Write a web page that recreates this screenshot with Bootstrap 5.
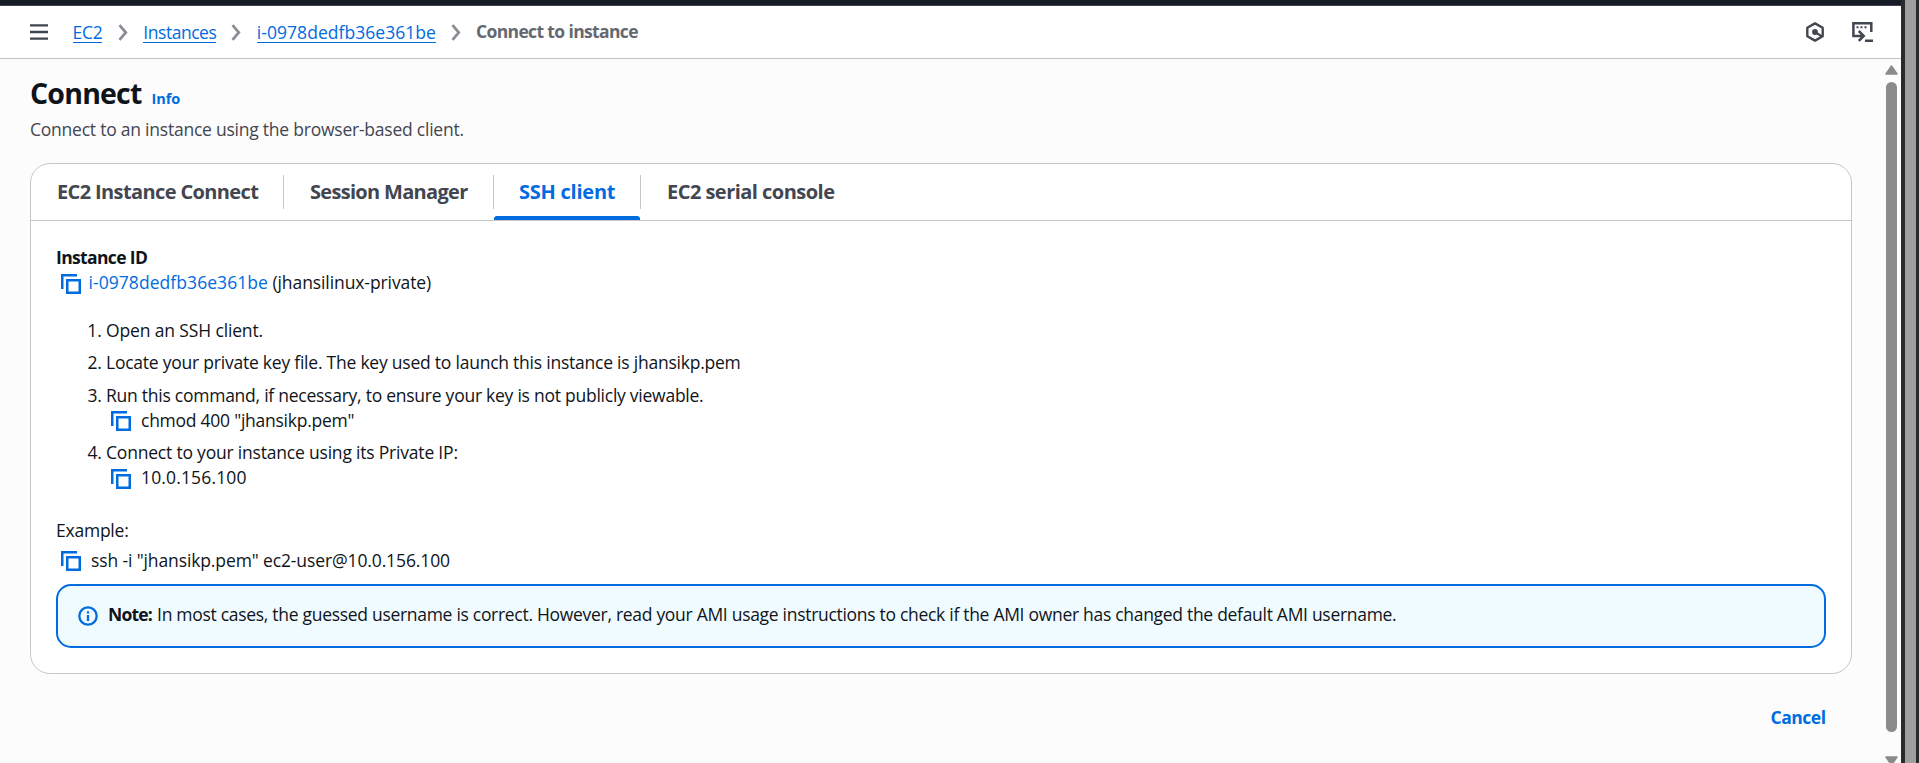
<!DOCTYPE html>
<html lang="en">
<head>
<meta charset="utf-8">
<meta name="viewport" content="width=device-width, initial-scale=1">
<title>Connect to instance | EC2</title>
<link href="https://cdn.jsdelivr.net/npm/bootstrap@5.3.0/dist/css/bootstrap.min.css" rel="stylesheet">
<style>
  :root { --link: #006ce0; --line: #c6c6cd; --ink: #0f141a; --muted: #424650; }
  body { font-family: "Open Sans", "Noto Sans", sans-serif; font-size: 17.5px; line-height: 25px; color: var(--ink); background: #fcfcfc; letter-spacing: -.23px; }
  a { color: var(--link); }
  svg { display: block; flex: none; }
  .page-main { min-width: 0; }
  .global-strip { height: 6px; background: #161d26; border-bottom: 1px solid #45404f; }
  .top-row { height: 53px; background: #fff; border-bottom: 1px solid #c2c2c6; padding: 0 28px 0 30px; }
  .crumbs { margin: 0 0 0 24.5px; }
  .crumbs a { text-decoration: none; display: block; height: 23px; border-bottom: 1.25px solid var(--link); line-height: 25px; margin-top: -1px; }
  .crumbs .current { color: #656871; font-weight: 700; letter-spacing: -.63px; margin-top: -1px; }
  .tools { gap: 27px; }
  .page-scroll { height: 704px; }
  .content-col { padding: 0 33px 0 30px; }
  .title-block { height: 104px; padding-top: 16px; }
  .title-block h1 { font-size: 28.5px; line-height: 37.5px; font-weight: 700; letter-spacing: -.8px; }
  .info-link { font-size: 14.5px; font-weight: 700; text-decoration: none; letter-spacing: -.05px; margin-left: 10px; }
  .subtitle { color: var(--muted); margin-top: 4.5px; letter-spacing: -.23px; }
  .panel { height: 511px; border: 1px solid var(--line); border-radius: 20px; }
  .panel-tabs { height: 57px; border-bottom: 1px solid var(--line); }
  .panel-tabs .nav-link { position: relative; padding: 15px 0 0 26px; font-size: 20px; font-weight: 700; color: var(--muted); border-radius: 0; height: 56px; }
  .panel-tabs .nav-link.active { color: var(--link); padding-left: 25px; }
  .panel-tabs .sep::after { content: ""; position: absolute; right: 0; top: 11px; width: 1px; height: 34px; background: var(--line); }
  .panel-tabs .active::before { content: ""; position: absolute; left: 0; right: 1px; bottom: 0; height: 4px; background: var(--link); border-radius: 3px 3px 0 0; }
  .t1 { width: 253px; letter-spacing: -.62px; } .t2 { width: 210px; letter-spacing: -.69px; }
  .t3 { width: 147px; letter-spacing: -.24px; } .t4 { width: 220px; letter-spacing: -.53px; }
  .panel-body { padding: 24px 25px 25px; }
  .field-label { font-weight: 700; letter-spacing: -.64px; }
  .copy-row { height: 25px; padding-left: 5px; }
  .copy-row svg { margin-top: 3px; }
  .steps { margin: 23px 0 28.1px; padding-left: 50px; }
  .steps li { margin-bottom: 7.3px; }
  .steps li:last-child { margin-bottom: 0; }
  .steps .copy-row { padding-left: 4.5px; }
  .note { height: 64px; margin-top: 11px; border: 2px solid var(--link); border-radius: 15px; background: #f0fbff; padding: 0 20px; letter-spacing: -.295px; }
  .note div { margin: -3px 0 0 10px; }
  .note b { letter-spacing: -.8px; margin-right: .8px; }
  .cancel { margin: 31px 26.5px 0 0; font-weight: 700; letter-spacing: -.5px; text-decoration: none; }
  .scroll-track { width: 16px; padding-top: 6px; overflow: hidden; }
  .thumb { width: 11px; height: 650px; border-radius: 6px; background: #8b8b8b; margin: 7px 0 24px 1px; flex: none; }
  .frame-edge { width: 18px; background: #9f9f9f; border-left: 4px solid #2b2b2b; border-right: 3px solid #2b2b2b; }
</style>
</head>
<body>
<svg class="d-none">
  <symbol id="copy" viewBox="0 0 20 20"><path d="M1.25 15V1.25H16M6.25 6.25h12.5v12.5H6.25z" fill="none" stroke="#006ce0" stroke-width="2.5"/></symbol>
  <symbol id="chev" viewBox="0 0 10 17"><path d="M1.5 1.2l6.3 7.3-6.3 7.3" fill="none" stroke="#8c8c94" stroke-width="2.7"/></symbol>
</svg>
<div class="d-flex vh-100 overflow-hidden">
  <div class="page-main flex-grow-1">
    <div class="global-strip"></div>
    <header class="top-row d-flex align-items-center">
      <svg width="18" height="16" viewBox="0 0 18 16"><path d="M0 1.4h18M0 8h18M0 14.6h18" stroke="#424650" stroke-width="2.4"/></svg>
      <nav class="crumbs d-flex align-items-center flex-grow-1" aria-label="breadcrumb">
        <a href="#" style="letter-spacing:-.3px">EC2</a>
        <svg width="10" height="17" style="margin:0 15px 0 16px"><use href="#chev"/></svg>
        <a href="#" style="letter-spacing:-.47px">Instances</a>
        <svg width="10" height="17" style="margin:0 15.5px 0 15px"><use href="#chev"/></svg>
        <a href="#" style="letter-spacing:.04px">i-0978dedfb36e361be</a>
        <svg width="10" height="17" style="margin:0 14.5px 0 15.5px"><use href="#chev"/></svg>
        <span class="current">Connect to instance</span>
      </nav>
      <div class="tools d-flex align-items-center">
        <svg width="20" height="20" viewBox="0 0 20 20" fill="none" stroke="#424650"><path d="M10 1.4l7.7 4.3v8.6L10 18.6l-7.7-4.3V5.7z" stroke-width="2.4" stroke-linejoin="round"/><circle cx="10" cy="10" r="2.9" fill="#424650" stroke="none"/><path d="M10 10l6.8 4.4" stroke-width="2.3"/></svg>
        <svg width="21" height="20" viewBox="0 0 21 20" fill="none" stroke="#424650" stroke-width="2.5"><path d="M5.5 14H1.4V1.3h17.9V10M13 18.7h8M5 14h6M6.8 9l4.9 4.900-4.900 4.900"/><path d="M4.500 5.200h2M8.500 5.200h2M12.500 5.200h2" stroke-width="2"/></svg>
      </div>
    </header>
    <div class="page-scroll d-flex">
      <main class="content-col flex-grow-1">
        <div class="title-block">
          <div class="d-flex align-items-baseline"><h1 class="m-0">Connect</h1><a href="#" class="info-link">Info</a></div>
          <div class="subtitle">Connect to an instance using the browser-based client.</div>
        </div>
        <section class="panel bg-white">
          <ul class="panel-tabs nav">
            <li class="nav-item"><a class="nav-link sep t1" href="#">EC2 Instance Connect</a></li>
            <li class="nav-item"><a class="nav-link sep t2" href="#">Session Manager</a></li>
            <li class="nav-item"><a class="nav-link sep t3 active" href="#">SSH client</a></li>
            <li class="nav-item"><a class="nav-link t4" href="#">EC2 serial console</a></li>
          </ul>
          <div class="panel-body">
            <div class="field-label">Instance ID</div>
            <div class="copy-row d-flex">
              <svg width="20" height="20" style="margin:4px 7.5px 0 0"><use href="#copy"/></svg>
              <a href="#" class="text-decoration-none" style="letter-spacing:.06px;margin-right:4.5px">i-0978dedfb36e361be</a>
              <span style="letter-spacing:-.09px">(jhansilinux-private)</span>
            </div>
            <ol class="steps">
              <li style="letter-spacing:-.14px">Open an SSH client.</li>
              <li>Locate your private key file. The key used to launch this instance is jhansikp.pem</li>
              <li style="letter-spacing:-.25px">Run this command, if necessary, to ensure your key is not publicly viewable.
                <div class="copy-row d-flex"><svg width="20" height="20" style="margin-right:10.5px"><use href="#copy"/></svg><span>chmod 400 "jhansikp.pem"</span></div>
              </li>
              <li style="letter-spacing:-.2px">Connect to your instance using its Private IP:
                <div class="copy-row d-flex"><svg width="20" height="20" style="margin:4px 10.5px 0 0"><use href="#copy"/></svg><span style="letter-spacing:.15px">10.0.156.100</span></div>
              </li>
            </ol>
            <div>Example:</div>
            <div class="copy-row d-flex" style="margin-top:5px"><svg width="20" height="20" style="margin-right:10px"><use href="#copy"/></svg><span style="letter-spacing:-.12px">ssh -i "jhansikp.pem" ec2-user@10.0.156.100</span></div>
            <div class="note d-flex align-items-center">
              <svg width="20" height="20" viewBox="0 0 20 20" fill="none" stroke="#006ce0" stroke-width="2.3"><circle cx="10" cy="10" r="8.7"/><path d="M10 9v6M10 5.2v2.3"/></svg>
              <div><b>Note:</b> In most cases, the guessed username is correct. However, read your AMI usage instructions to check if the AMI owner has changed the default AMI username.</div>
            </div>
          </div>
        </section>
        <div class="d-flex justify-content-end"><a href="#" class="cancel">Cancel</a></div>
      </main>
      <div class="scroll-track d-flex flex-column">
        <svg width="13" height="10" viewBox="0 0 13 10"><path d="M6.5 1L12 9H1z" fill="#8b8b8b" stroke="#8b8b8b" stroke-width="1.5" stroke-linejoin="round"/></svg>
        <div class="thumb"></div>
        <svg width="13" height="10" viewBox="0 0 13 10"><path d="M1 1h11L6.5 9z" fill="#8b8b8b" stroke="#8b8b8b" stroke-width="1.5" stroke-linejoin="round"/></svg>
      </div>
    </div>
  </div>
  <div class="frame-edge flex-shrink-0"></div>
</div>
<script src="https://cdn.jsdelivr.net/npm/bootstrap@5.3.0/dist/js/bootstrap.bundle.min.js"></script>
</body>
</html>
